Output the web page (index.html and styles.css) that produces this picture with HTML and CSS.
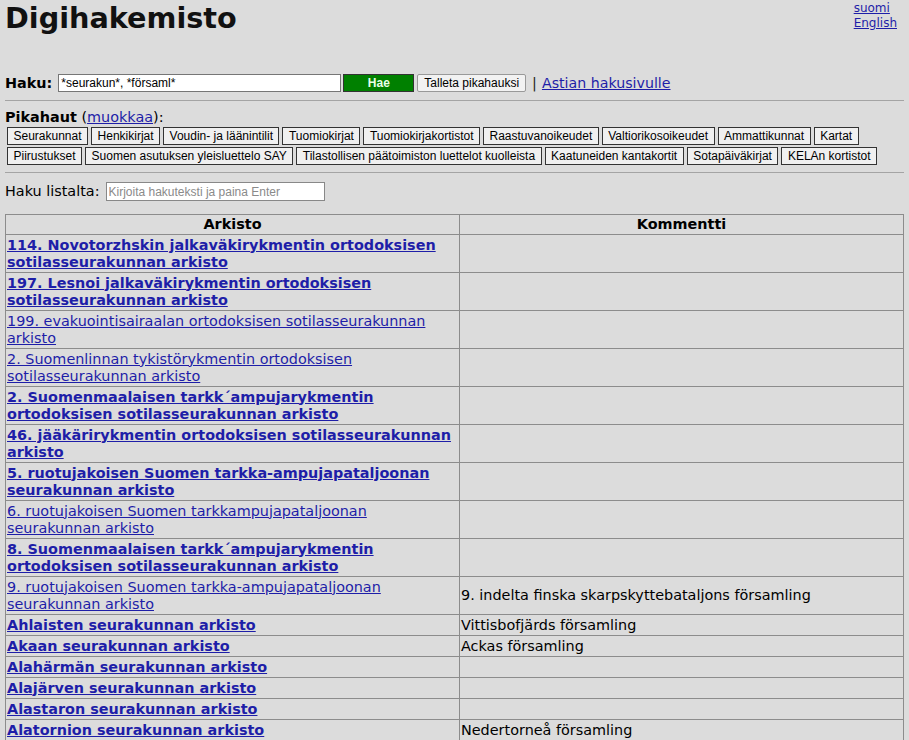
FILE: index.html
```html
<!DOCTYPE html>
<html lang="fi">
<head>
<meta charset="utf-8">
<title>Digihakemisto</title>
<link rel="stylesheet" href="styles.css">
</head>
<body>
<header class="top">
  <h1 class="title">Digihakemisto</h1>
  <nav class="lang">
    <a href="#">suomi</a>
    <a href="#">English</a>
  </nav>
</header>

<form class="search">
  <span class="search-label">Haku:</span>
  <input class="search-input" type="text" value="*seurakun*, *församl*">
  <button class="btn-go" type="button">Hae</button>
  <button class="btn-save" type="button">Talleta pikahauksi</button>
  <span class="sep">|</span>
  <a class="search-link" href="#">Astian hakusivulle</a>
</form>

<hr class="rule">

<section class="quick">
  <div class="quick-title"><b>Pikahaut</b> (<a href="#">muokkaa</a>):</div>
  <div class="quick-buttons">
    <button class="qbtn" type="button">Seurakunnat</button>
    <button class="qbtn" type="button">Henkikirjat</button>
    <button class="qbtn" type="button">Voudin- ja läänintilit</button>
    <button class="qbtn" type="button">Tuomiokirjat</button>
    <button class="qbtn" type="button">Tuomiokirjakortistot</button>
    <button class="qbtn" type="button">Raastuvanoikeudet</button>
    <button class="qbtn" type="button">Valtiorikosoikeudet</button>
    <button class="qbtn" type="button">Ammattikunnat</button>
    <button class="qbtn" type="button">Kartat</button>
    <button class="qbtn" type="button">Piirustukset</button>
    <button class="qbtn" type="button">Suomen asutuksen yleisluettelo SAY</button>
    <button class="qbtn" type="button">Tilastollisen päätoimiston luettelot kuolleista</button>
    <button class="qbtn" type="button">Kaatuneiden kantakortit</button>
    <button class="qbtn" type="button">Sotapäiväkirjat</button>
    <button class="qbtn" type="button">KELAn kortistot</button>
  </div>
</section>

<hr class="rule rule-2">

<div class="filter">
  <span class="filter-label">Haku listalta:</span>
  <input class="filter-input" type="text" placeholder="Kirjoita hakuteksti ja paina Enter">
</div>

<table class="list">
  <colgroup><col class="col-a"><col class="col-b"></colgroup>
  <thead>
    <tr><th>Arkisto</th><th>Kommentti</th></tr>
  </thead>
  <tbody>
    <tr><td><a class="strong" href="#">114. Novotorzhskin jalkaväkirykmentin ortodoksisen sotilasseurakunnan arkisto</a></td><td></td></tr>
    <tr><td><a class="strong" href="#">197. Lesnoi jalkaväkirykmentin ortodoksisen sotilasseurakunnan arkisto</a></td><td></td></tr>
    <tr><td><a href="#">199. evakuointisairaalan ortodoksisen sotilasseurakunnan arkisto</a></td><td></td></tr>
    <tr><td><a href="#">2. Suomenlinnan tykistörykmentin ortodoksisen sotilasseurakunnan arkisto</a></td><td></td></tr>
    <tr><td><a class="strong" href="#">2. Suomenmaalaisen tarkk´ampujarykmentin ortodoksisen sotilasseurakunnan arkisto</a></td><td></td></tr>
    <tr><td><a class="strong" href="#">46. jääkärirykmentin ortodoksisen sotilasseurakunnan arkisto</a></td><td></td></tr>
    <tr><td><a class="strong" href="#">5. ruotujakoisen Suomen tarkka-ampujapataljoonan seurakunnan arkisto</a></td><td></td></tr>
    <tr><td><a href="#">6. ruotujakoisen Suomen tarkkampujapataljoonan seurakunnan arkisto</a></td><td></td></tr>
    <tr><td><a class="strong" href="#">8. Suomenmaalaisen tarkk´ampujarykmentin ortodoksisen sotilasseurakunnan arkisto</a></td><td></td></tr>
    <tr><td><a href="#">9. ruotujakoisen Suomen tarkka-ampujapataljoonan seurakunnan arkisto</a></td><td>9. indelta finska skarpskyttebataljons församling</td></tr>
    <tr><td><a class="strong" href="#">Ahlaisten seurakunnan arkisto</a></td><td>Vittisbofjärds församling</td></tr>
    <tr><td><a class="strong" href="#">Akaan seurakunnan arkisto</a></td><td>Ackas församling</td></tr>
    <tr><td><a class="strong" href="#">Alahärmän seurakunnan arkisto</a></td><td></td></tr>
    <tr><td><a class="strong" href="#">Alajärven seurakunnan arkisto</a></td><td></td></tr>
    <tr><td><a class="strong" href="#">Alastaron seurakunnan arkisto</a></td><td></td></tr>
    <tr><td><a class="strong" href="#">Alatornion seurakunnan arkisto</a></td><td>Nedertorneå församling</td></tr>
  </tbody>
</table>
</body>
</html>
```

FILE: styles.css
```css
html {
  scrollbar-width: none;
  background: #dcdcdc;
}
html::-webkit-scrollbar { display: none; }

body {
  margin: 0 5px;
  background: #dcdcdc;
  color: #000;
  font-family: "DejaVu Sans", Verdana, sans-serif;
  font-size: 14.4px;
  line-height: 17px;
}

a { color: #1e1ea8; text-decoration: underline; }

/* header */
.top {
  display: flex;
  justify-content: space-between;
  align-items: flex-start;
  padding-top: 2px;
}
.title {
  margin: 0;
  font-size: 28.7px;
  line-height: 33px;
  font-weight: bold;
  color: #111;
}
.lang {
  display: flex;
  flex-direction: column;
  align-items: flex-start;
  margin-top: -1px;
  margin-right: 7px;
  font-size: 12px;
  line-height: 15px;
}

/* search row */
.search {
  display: flex;
  align-items: center;
  margin-top: 39px;
  height: 18px;
}
.search-label { font-weight: bold; }
.search-input {
  margin: 0 0 0 6px;
  width: 283px;
  height: 18px;
  box-sizing: border-box;
  border: 1px solid #767676;
  background: #fff;
  padding: 0 2px;
  font-family: "Liberation Sans", Arial, sans-serif;
  font-size: 12px;
  color: #000;
}
.btn-go {
  margin: 0 0 0 2px;
  width: 71px;
  height: 18px;
  box-sizing: border-box;
  border: 1px solid #333;
  background: #008000;
  color: #e8ffe8;
  font-family: "Liberation Sans", Arial, sans-serif;
  font-size: 12px;
  font-weight: bold;
  padding: 0;
}
.btn-save {
  margin: 0 0 0 3px;
  height: 18px;
  box-sizing: border-box;
  border: 1px solid #999;
  border-radius: 2px;
  background: #f2f2f2;
  color: #000;
  font-family: "Liberation Sans", Arial, sans-serif;
  font-size: 12px;
  padding: 0 6px;
}
.sep { margin: 0 5px 0 6px; color: #222; }
.search-link { font-size: 14.2px; }

/* rules */
.rule {
  margin: 8px 0 0 -5px;
  border: 0;
  border-top: 1px solid #a4a4a4;
  height: 0;
}
.rule-2 { margin-top: 7px; }

/* quick searches */
.quick { padding-top: 8px; }
.quick-title { line-height: 17px; }
.quick-buttons {
  display: flex;
  flex-wrap: wrap;
  column-gap: 3px;
  row-gap: 2px;
  margin-top: 1px;
  padding-left: 2px;
}
.qbtn {
  height: 18px;
  box-sizing: border-box;
  margin: 0;
  padding: 0 5.5px;
  border: 1px solid #333;
  background: #f0f0f0;
  color: #000;
  font-family: "Liberation Sans", Arial, sans-serif;
  font-size: 12px;
  line-height: 14px;
}

/* filter */
.filter {
  display: flex;
  align-items: center;
  margin-top: 9px;
  height: 19px;
}
.filter-input {
  margin: 0 0 0 6px;
  width: 219px;
  height: 19px;
  box-sizing: border-box;
  border: 1px solid #888;
  background: #fff;
  padding: 0 2px;
  font-family: "Liberation Sans", Arial, sans-serif;
  font-size: 12px;
}
.filter-input::placeholder { color: #8a8a8a; }

/* table */
.list {
  margin-top: 13px;
  width: 100%;
  border-collapse: collapse;
  table-layout: fixed;
}
.col-a { width: 454px; }
.list th, .list td {
  border: 1px solid #8c8c8c;
  padding: 1.5px 1px;
  line-height: 17px;
  text-align: left;
  vertical-align: middle;
}
.list th {
  text-align: center;
  font-weight: bold;
  padding: 1px 1px;
}
.list a.strong { font-weight: bold; }
```
